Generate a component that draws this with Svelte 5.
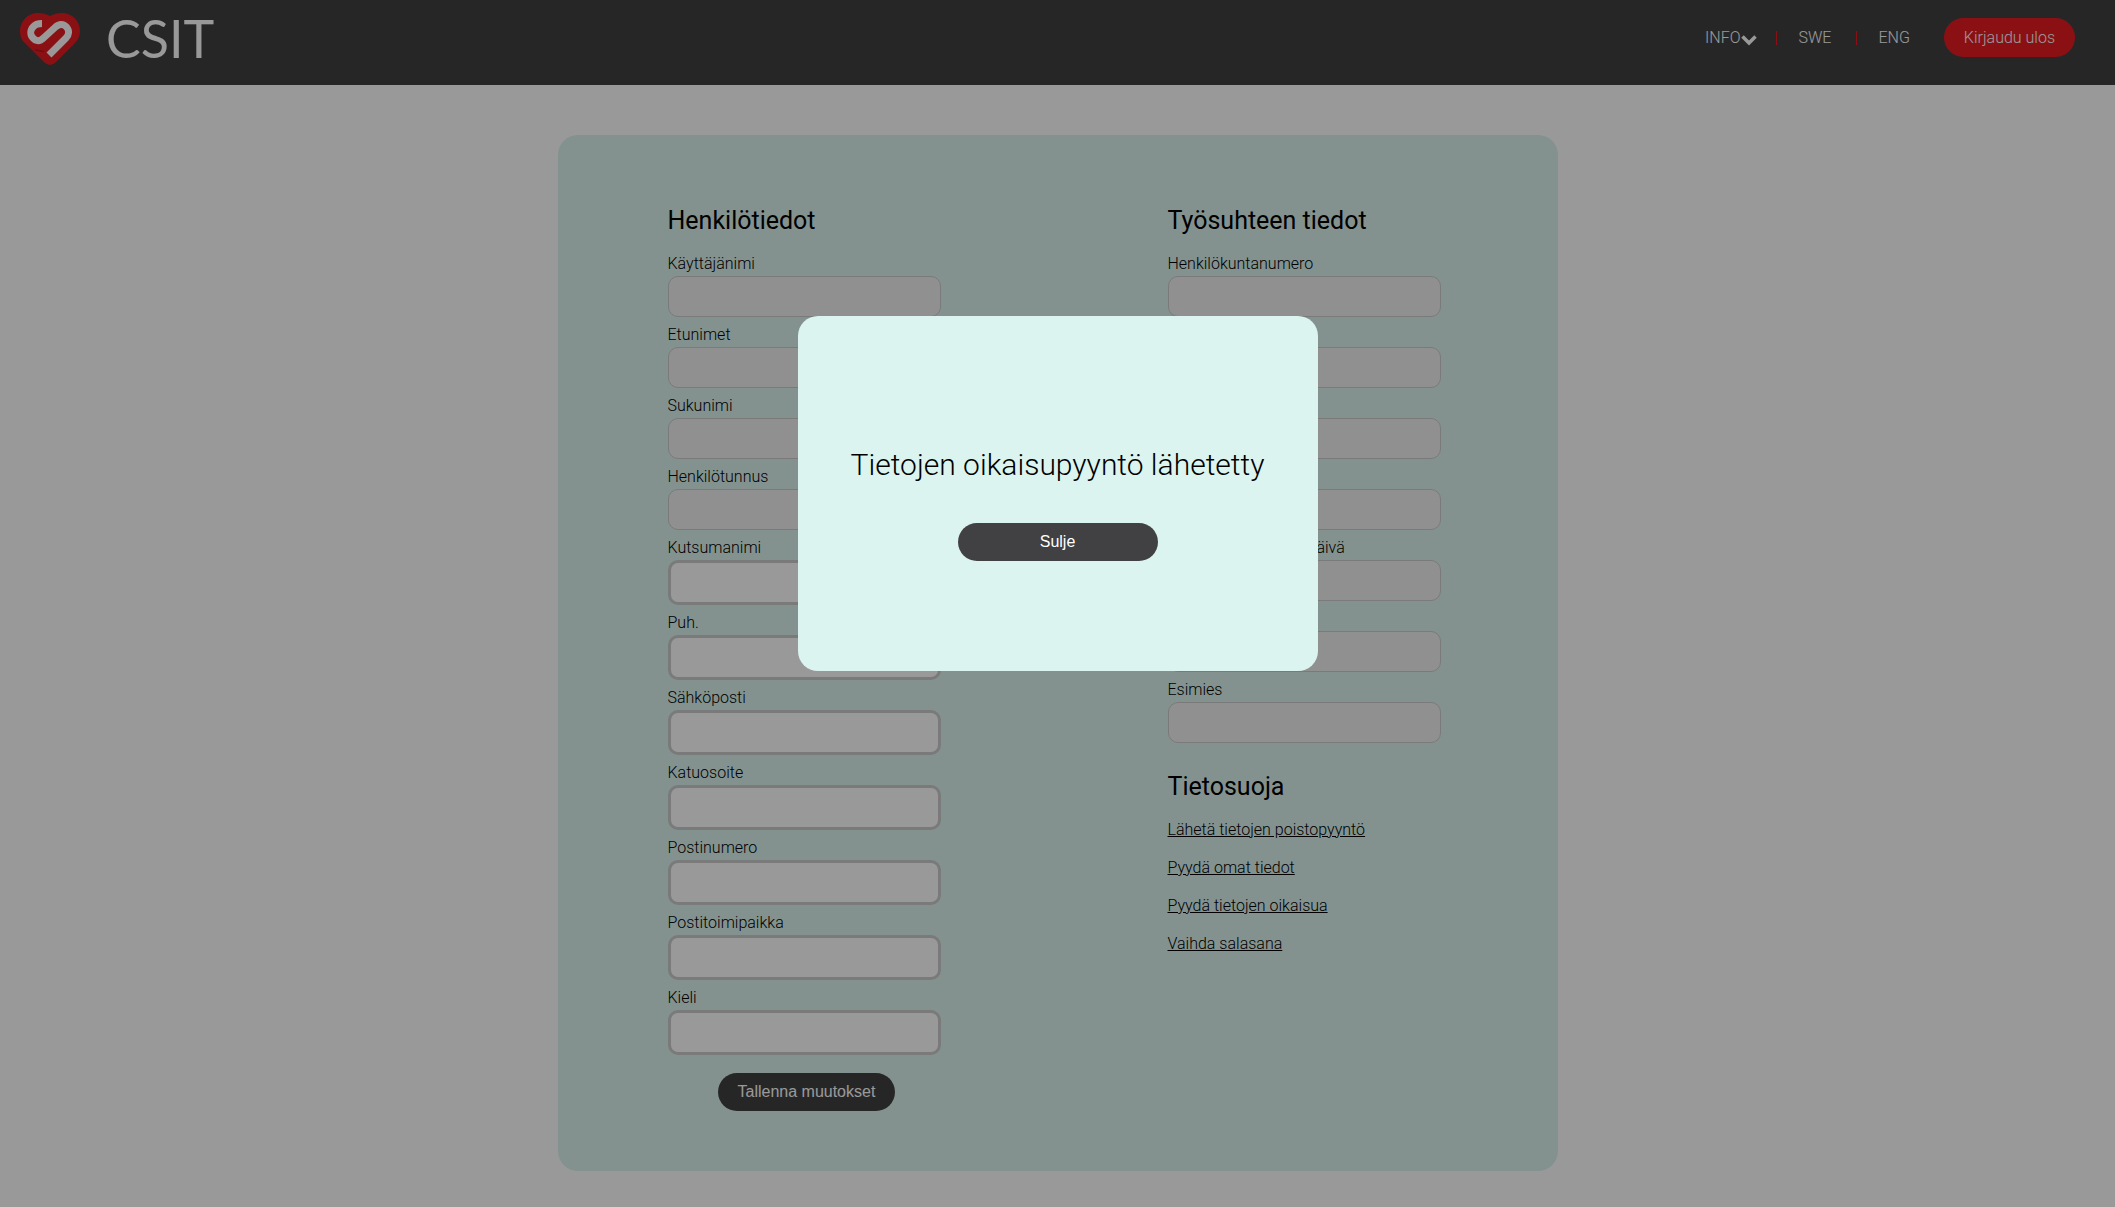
<script>
  const personal = [
    { id: 'username', label: 'Käyttäjänimi', locked: true },
    { id: 'firstnames', label: 'Etunimet', locked: true },
    { id: 'lastname', label: 'Sukunimi', locked: true },
    { id: 'ssn', label: 'Henkilötunnus', locked: true },
    { id: 'nickname', label: 'Kutsumanimi' },
    { id: 'phone', label: 'Puh.' },
    { id: 'email', label: 'Sähköposti' },
    { id: 'street', label: 'Katuosoite' },
    { id: 'zip', label: 'Postinumero' },
    { id: 'city', label: 'Postitoimipaikka' },
    { id: 'language', label: 'Kieli' }
  ];
  const employment = [
    { id: 'staffnumber', label: 'Henkilökuntanumero' },
    { id: 'title', label: 'Nimike' },
    { id: 'unit', label: 'Yksikkö' },
    { id: 'contract', label: '' },
    { id: 'startdate', label: 'Työsuhteen alkamispäivä' },
    { id: 'place', label: 'Toimipaikka' },
    { id: 'manager', label: 'Esimies' }
  ];
  const privacy = [
    'Lähetä tietojen poistopyyntö',
    'Pyydä omat tiedot',
    'Pyydä tietojen oikaisua',
    'Vaihda salasana'
  ];
  let open = $state(true);
</script>

<header>
  <a class="brand" href="#home">
    <svg viewBox="0 0 60 52" width="60" height="52" aria-hidden="true">
      <path fill="#e81b22" d="M30 3C26 1 22 0 18 0C8 0 0 8 0 18C0 24 2 28 6 31L24 49Q30 55 36 49L54 31C58 27 60 23 60 18C60 8 52 0 42 0C38 0 34 1 30 3Z" />
      <path fill="none" stroke="#fff" stroke-width="7" stroke-linejoin="round" d="M22 10.500C18 10.500 15.500 11 13.500 13.500C10 17 10 22 13 25C16 28.500 20 28.500 23.500 25L35.500 14C39 10.500 43.500 10.500 46.500 14C49.500 17.500 49 22 46 25L29 42" />
      <path fill="none" stroke="#b8151b" stroke-width="1.500" d="M15 37L24 38.500" />
    </svg>
    <span>CSIT</span>
  </a>
  <nav>
    <button class="info" type="button">INFO<svg viewBox="0 0 16 12" width="16" height="12" aria-hidden="true"><path d="M1.500 2.500L8 9L14.500 2.500" fill="none" stroke="#fff" stroke-width="3.500" /></svg></button>
    <i class="bar"></i>
    <a class="swe" href="#swe">SWE</a>
    <i class="bar"></i>
    <a class="eng" href="#eng">ENG</a>
    <button class="logout" type="button">Kirjaudu ulos</button>
  </nav>
</header>

<main>
  <form class="col" onsubmit={(e) => e.preventDefault()}>
    <h2>Henkilötiedot</h2>
    {#each personal as f}
      <label for={f.id}>{f.label}</label>
      <input id={f.id} type="text" disabled={f.locked} />
    {/each}
    <button class="dark save">Tallenna muutokset</button>
  </form>
  <section class="col">
    <h2>Työsuhteen tiedot</h2>
    {#each employment as f}
      <label for={f.id}>{f.label}</label>
      <input id={f.id} type="text" disabled />
    {/each}
    <h2 class="privacy">Tietosuoja</h2>
    <ul>
      {#each privacy as p}
        <li><a href="#tietosuoja">{p}</a></li>
      {/each}
    </ul>
  </section>
</main>

{#if open}
  <div class="overlay">
    <div class="modal" role="dialog" aria-modal="true" aria-labelledby="modal-title">
      <p id="modal-title">Tietojen oikaisupyyntö lähetetty</p>
      <button class="dark close" type="button" onclick={() => (open = false)}>Sulje</button>
    </div>
  </div>
{/if}

<style>
  :global(body) {
    background: #fff;
    font: 300 16px/19px Roboto, sans-serif;
    color: #000;
  }
  header {
    display: flex;
    justify-content: space-between;
    align-items: flex-start;
    box-sizing: border-box;
    height: 85px;
    padding: 13px 40px 0 20px;
    background: #414042;
  }
  .brand {
    display: flex;
    gap: 26px;
    color: #fff;
    text-decoration: none;
    font: 400 52px/51px Lato, sans-serif;
  }
  nav {
    display: flex;
    align-items: center;
    padding-top: 5px;
  }
  nav a, .info {
    color: #fff;
    text-decoration: none;
  }
  button {
    border: 0;
    cursor: pointer;
  }
  .info {
    display: flex;
    align-items: center;
    gap: 1px;
    margin-right: 19px;
    padding: 0;
    background: none;
    font: inherit;
  }
  .info svg {
    margin-top: 4px;
  }
  .bar {
    width: 1px;
    height: 14px;
    background: #e81b22;
  }
  .swe {
    margin: 0 25px 0 21px;
  }
  .eng {
    margin: 0 34px 0 21px;
  }
  .logout {
    height: 39px;
    padding: 0 20px;
    border-radius: 20px;
    background: #e81b22;
    color: #fff;
    font: inherit;
  }
  main {
    display: grid;
    grid-template-columns: 1fr 1fr;
    box-sizing: border-box;
    max-width: 1000px;
    margin: 50px auto 36px;
    padding: 70px 0 60px;
    border-radius: 20px;
    background: #dbf4ef;
  }
  .col {
    display: flex;
    flex-direction: column;
    padding: 0 117px 0 110px;
  }
  h2 {
    margin: 0 0 13px;
    font-size: 25px;
    line-height: 32px;
    font-weight: 400;
  }
  label {
    height: 24px;
    padding-top: 2px;
    line-height: 24px;
  }
  input {
    box-sizing: border-box;
    width: 100%;
    height: 45px;
    margin: 0 0 4px;
    padding: 0 10px;
    border: 3px solid #cbcbcb;
    border-radius: 10px;
    background: #fff;
    font: inherit;
  }
  input:disabled {
    height: 41px;
    border: 1px solid #cbcbcb;
    background: #f1f1f1;
  }
  .dark {
    height: 38px;
    border-radius: 19px;
    background: #414042;
    color: #fff;
    font: 400 16px/18px "Liberation Sans", sans-serif;
  }
  .save {
    align-self: flex-start;
    margin: 14px 0 0 50px;
    padding: 0 20px;
  }
  .privacy {
    margin-top: 24px;
  }
  ul {
    display: grid;
    gap: 19px;
    margin: 4px 0 0;
    padding: 0;
    list-style: none;
  }
  li a {
    color: #000;
  }
  .overlay {
    position: fixed;
    inset: 0;
    display: flex;
    align-items: flex-start;
    justify-content: center;
    padding-top: 316px;
    background: rgba(0, 0, 0, 0.4);
  }
  .modal {
    display: flex;
    flex-direction: column;
    align-items: center;
    box-sizing: border-box;
    width: 520px;
    padding: 131px 20px 110px;
    border-radius: 20px;
    background: #dbf4ef;
  }
  .modal p {
    margin: 0 0 40px;
    font-size: 30px;
    line-height: 36px;
  }
  .close {
    width: 200px;
  }
</style>
